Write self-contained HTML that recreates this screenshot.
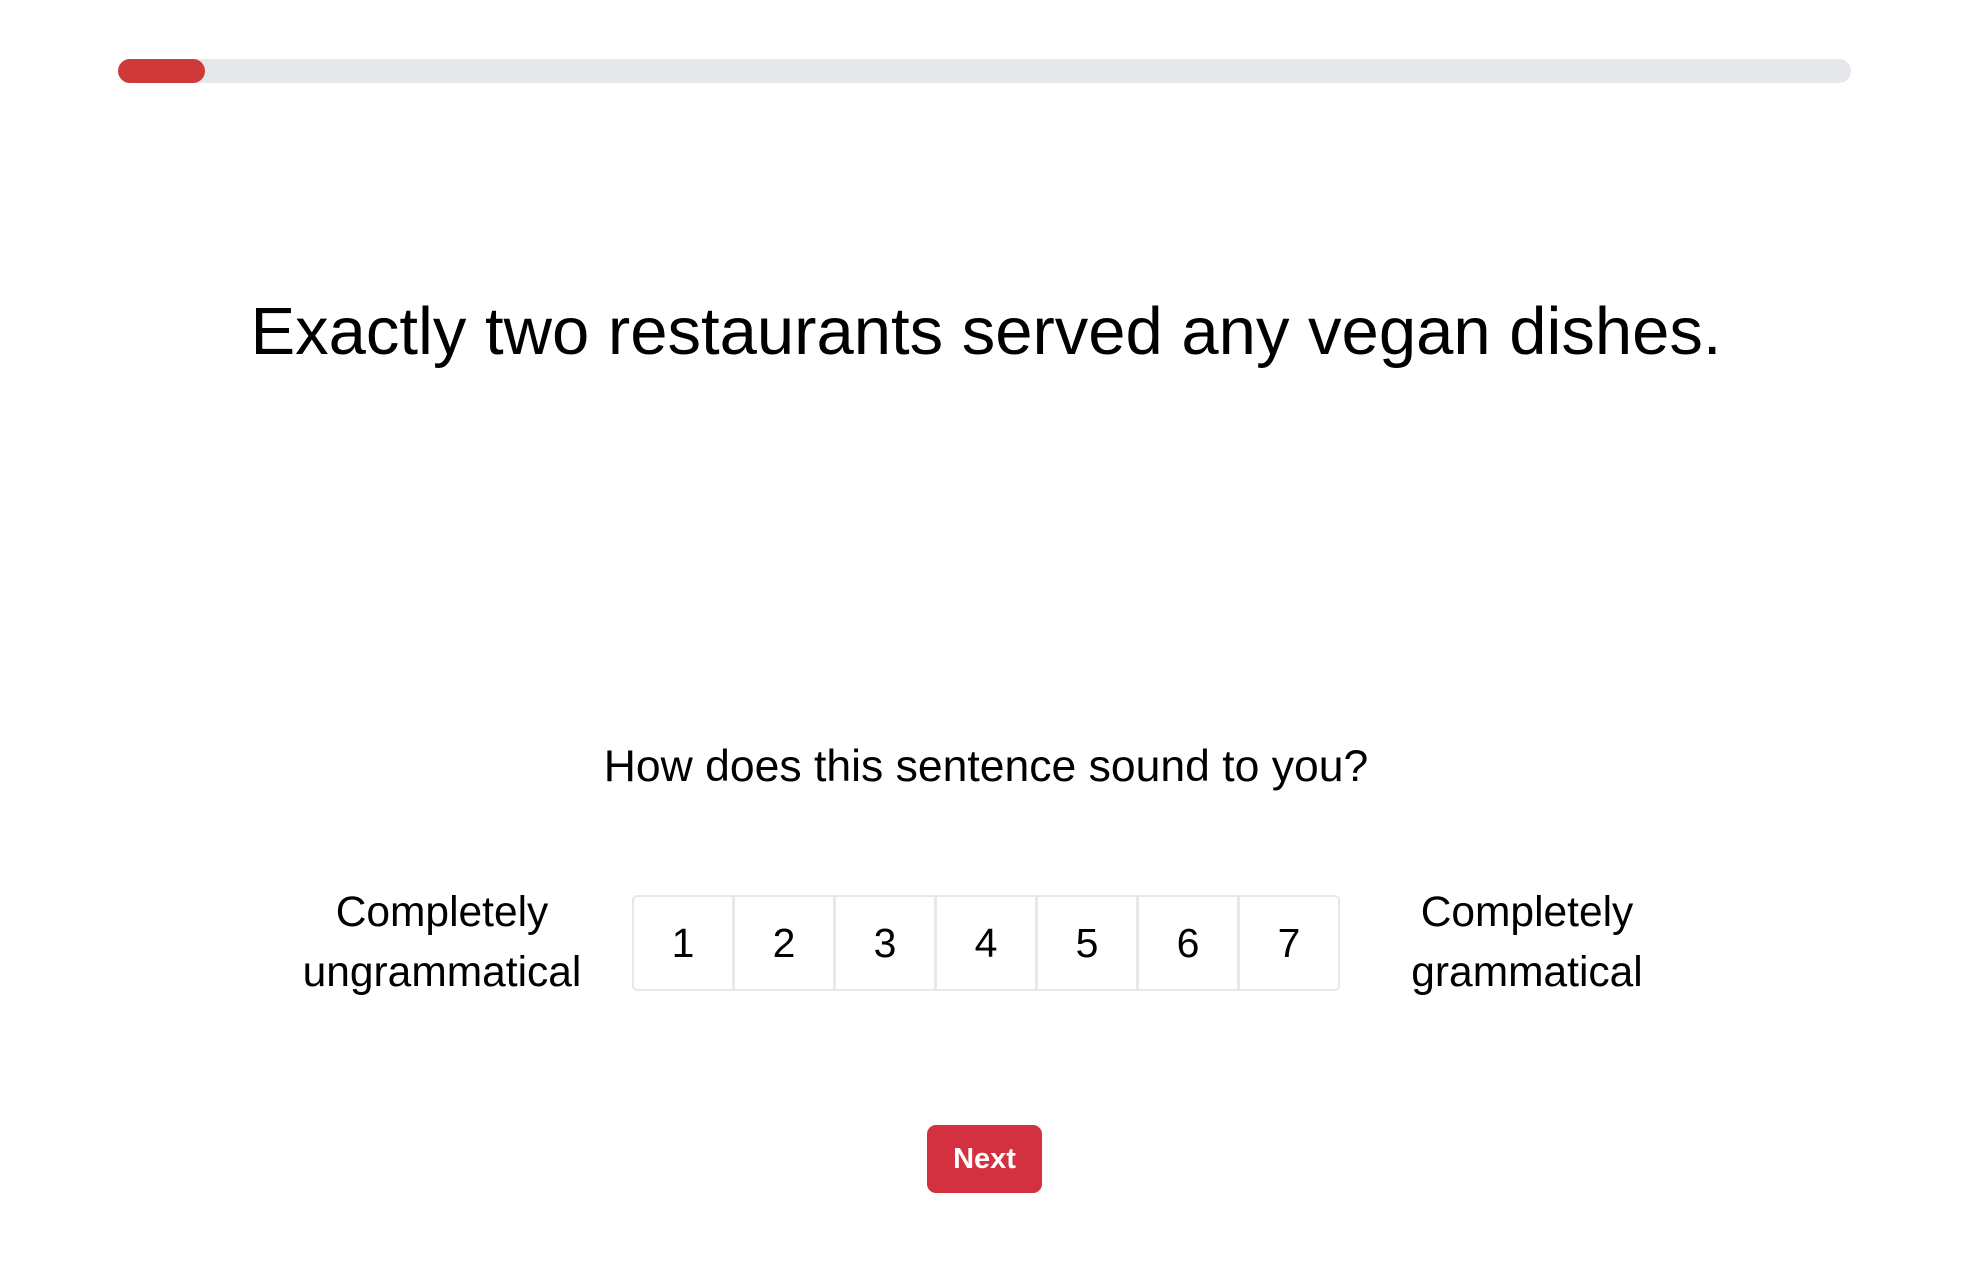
<!DOCTYPE html>
<html><head><meta charset="utf-8"><style>
html,body{margin:0;padding:0;background:#fff;width:1972px;height:1268px;overflow:hidden;font-family:"Liberation Sans",sans-serif;color:#000}
.bar{position:absolute;left:118px;top:59px;width:1733px;height:24px;background:#e5e7eb;border-radius:12px}
.fill{position:absolute;left:0;top:0;width:87px;height:24px;background:#d0393a;border-radius:12px}
.h{position:absolute;left:0;width:1972px;text-align:center;top:289px;font-size:67px;line-height:86px}
.q{position:absolute;left:0;width:1972px;text-align:center;top:742px;font-size:44.5px;line-height:50px}
.lab{position:absolute;text-align:center;font-size:42.5px;line-height:60px;width:400px}
.scale{position:absolute;left:632px;top:895px;display:flex;border:2px solid #e5e7eb;border-radius:5px;overflow:hidden}
.scale div{width:98px;height:92px;display:flex;align-items:center;justify-content:center;font-size:41px;border-left:3px solid #e5e7eb}
.scale div:first-child{border-left:none}
.btn{position:absolute;left:927px;top:1125px;width:115px;height:68px;background:#d3313f;border-radius:9px;color:#fff;font-weight:bold;font-size:29px;display:flex;align-items:center;justify-content:center}
</style></head><body>
<div class="bar"><div class="fill"></div></div>
<div class="h">Exactly two restaurants served any vegan dishes.</div>
<div class="q">How does this sentence sound to you?</div>
<div class="lab" style="left:242px;top:883px">Completely<br>ungrammatical</div>
<div class="scale"><div>1</div><div>2</div><div>3</div><div>4</div><div>5</div><div>6</div><div>7</div></div>
<div class="lab" style="left:1327px;top:883px">Completely<br>grammatical</div>
<div class="btn">Next</div>
</body></html>
